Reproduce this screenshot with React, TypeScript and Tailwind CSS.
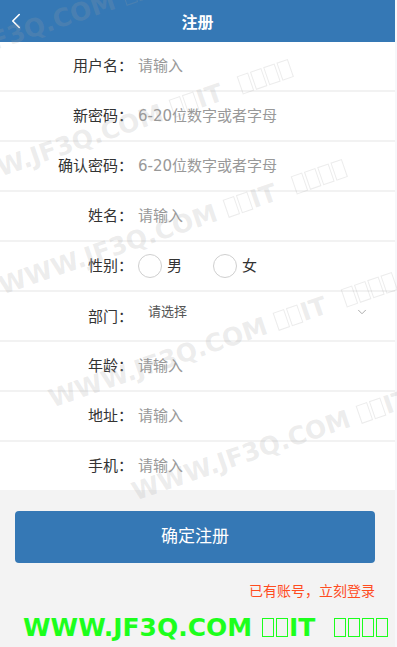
import { ChevronLeft, ChevronDown } from 'lucide-react';

const cjk = { fontFamily: '"DejaVu Sans", "Noto Sans CJK SC", sans-serif' };
const mark = { fontFamily: '"DejaVu Sans", Verdana, sans-serif' };

function Tofu() {
  return <span className="inline-block w-[12px] h-[19px] border-[1.5px] border-current mx-[1px] align-[-1px]" />;
}

function Mark() {
  return (
    <>
      WWW.JF3Q.COM <Tofu /><Tofu />IT&nbsp; <Tofu /><Tofu /><Tofu /><Tofu />
    </>
  );
}

function Field({ label, placeholder, last = false }: { label: string; placeholder: string; last?: boolean }) {
  return (
    <div className={last ? 'flex items-center h-[48px]' : 'flex items-center h-[50px] border-b-2 border-[#f2f2f2]'}>
      <span className="w-[133px] text-right text-[15px] text-[#333]">{label}：</span>
      <span className="ml-[5px] text-[15px] text-[#999]">{placeholder}</span>
    </div>
  );
}

export default function App() {
  return (
    <div className="relative min-h-[647px] bg-[#f7f7fa] overflow-hidden" style={cjk}>
      <div className="w-[395px] min-h-[647px] bg-[#f3f3f3]">
        {/* header */}
        <div className="relative h-[42px] bg-[#3578b5] flex items-center justify-center">
          <ChevronLeft className="absolute left-[3px] top-[8px] w-[26px] h-[26px] text-white" strokeWidth={1.5} />
          <span className="text-white text-[16px] font-bold" style={{ fontFamily: '"Noto Sans CJK SC", sans-serif' }}>注册</span>
        </div>

        {/* form */}
        <div className="bg-white">
          <Field label="用户名" placeholder="请输入" />
          <Field label="新密码" placeholder="6-20位数字或者字母" />
          <Field label="确认密码" placeholder="6-20位数字或者字母" />
          <Field label="姓名" placeholder="请输入" />
          <div className="flex items-center h-[50px] border-b-2 border-[#f2f2f2]">
            <span className="w-[133px] text-right text-[15px] text-[#333]">性别：</span>
            <span className="ml-[5px] w-[24px] h-[24px] rounded-full border border-[#cfcfcf]" />
            <span className="ml-[5px] text-[15px] text-[#333]">男</span>
            <span className="ml-[31px] w-[24px] h-[24px] rounded-full border border-[#cfcfcf]" />
            <span className="ml-[5px] text-[15px] text-[#333]">女</span>
          </div>
          <div className="flex items-center h-[50px] border-b-2 border-[#f2f2f2]">
            <span className="w-[133px] text-right text-[15px] text-[#333] pt-[2px]">部门：</span>
            <div className="flex-1 self-start flex items-center justify-between pt-[10px] pl-[15px] pr-[26px]">
              <span className="text-[13px] text-[#555]">请选择</span>
              <ChevronDown className="w-[14px] h-[14px] text-[#999]" strokeWidth={1.4} />
            </div>
          </div>
          <Field label="年龄" placeholder="请输入" />
          <Field label="地址" placeholder="请输入" />
          <Field label="手机" placeholder="请输入" last />
        </div>

        {/* actions */}
        <div className="px-[15px] pt-[21px]">
          <button className="w-[360px] h-[52px] rounded-[4px] bg-[#3578b5] text-white text-[17px]">确定注册</button>
          <div className="mt-[19px] text-right pr-[5px] text-[14px] text-[#ff4c1f] leading-[18px]">已有账号，立刻登录</div>
        </div>
        <div className="mt-[13px] pl-[23px] whitespace-nowrap text-[25px] leading-[30px] font-bold text-[#1cff1c]" style={mark}>
          <Mark />
        </div>
      </div>

      {/* watermark overlay */}
      <div className="pointer-events-none absolute inset-0 z-10 overflow-hidden text-[25px] leading-[30px] font-bold text-[rgba(160,160,160,0.2)] whitespace-nowrap" style={mark}>
        <span className="absolute left-[-107px] top-[61px] origin-top-left rotate-[-19deg]"><Mark /></span>
        <span className="absolute left-[-59px] top-[173px] origin-top-left rotate-[-19deg]"><Mark /></span>
        <span className="absolute left-[-5px] top-[273px] origin-top-left rotate-[-19deg]"><Mark /></span>
        <span className="absolute left-[45px] top-[386px] origin-top-left rotate-[-19deg]"><Mark /></span>
        <span className="absolute left-[128px] top-[479px] origin-top-left rotate-[-19deg]"><Mark /></span>
      </div>
    </div>
  );
}
